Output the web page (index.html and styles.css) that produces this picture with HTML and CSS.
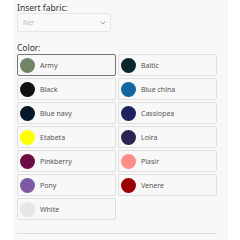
FILE: index.html
```html
<!DOCTYPE html>
<html>
<head>
<meta charset="utf-8">
<link rel="stylesheet" href="styles.css">
</head>
<body>
<div class="panel">
  <div class="label">Insert fabric:</div>
  <div class="select">
    <span class="select-text">Ner</span>
    <svg class="chev" width="6" height="4" viewBox="0 0 6 4"><path d="M0.5 0.5 L3 3 L5.5 0.5" fill="none" stroke="#999" stroke-width="0.9"/></svg>
  </div>
  <div class="label color-label">Color:</div>
  <div class="grid">
    <div class="swatch selected"><span class="dot" style="background:#6f8566"></span><span class="name">Army</span></div>
    <div class="swatch"><span class="dot" style="background:#0c262d"></span><span class="name">Baltic</span></div>
    <div class="swatch"><span class="dot" style="background:#101010"></span><span class="name">Black</span></div>
    <div class="swatch"><span class="dot" style="background:#1466a0"></span><span class="name">Blue china</span></div>
    <div class="swatch"><span class="dot" style="background:#06172a"></span><span class="name">Blue navy</span></div>
    <div class="swatch"><span class="dot" style="background:#1e2360"></span><span class="name">Cassiopea</span></div>
    <div class="swatch"><span class="dot" style="background:#ffff00"></span><span class="name">Etabeta</span></div>
    <div class="swatch"><span class="dot" style="background:#2d2350"></span><span class="name">Loira</span></div>
    <div class="swatch"><span class="dot" style="background:#6d0b45"></span><span class="name">Pinkberry</span></div>
    <div class="swatch"><span class="dot" style="background:#fd8d88"></span><span class="name">Plasir</span></div>
    <div class="swatch"><span class="dot" style="background:#7e5aa5"></span><span class="name">Pony</span></div>
    <div class="swatch"><span class="dot" style="background:#9a0000"></span><span class="name">Venere</span></div>
    <div class="swatch"><span class="dot" style="background:#e6e6e6"></span><span class="name">White</span></div>
  </div>
  <div class="rule"></div>
</div>
</body>
</html>
```
FILE: styles.css
```css
html, body {
  margin: 0;
  padding: 0;
  background: #ffffff;
}
body {
  font-family: "Noto Sans", "DejaVu Sans", sans-serif;
  color: #333;
}
.panel {
  margin-left: 13px;
  width: 200px;
  height: 240px;
  padding: 2px 11px 0 4px;
  background: #f8f8f8;
  box-sizing: content-box;
  display: flex;
  flex-direction: column;
}
.label {
  font-size: 8.5px;
  line-height: 11px;
  color: #333;
}
.select {
  width: 94px;
  height: 19px;
  box-sizing: border-box;
  border: 1px solid #e6e6e6;
  border-radius: 2px;
  background: #f9f9f9;
  display: flex;
  align-items: center;
  justify-content: space-between;
  padding: 0 4px 0 5px;
}
.select-text {
  font-size: 6.5px;
  color: #bbb;
}
.chev {
  display: block;
}
.color-label {
  margin-top: 10px;
  margin-bottom: 1px;
}
.grid {
  display: grid;
  grid-template-columns: 99px 99px;
  grid-auto-rows: 22px;
  gap: 2px 2px;
}
.swatch {
  box-sizing: border-box;
  border: 1px solid #e0e0e0;
  border-radius: 2px;
  display: flex;
  align-items: center;
  padding-left: 2px;
  gap: 5px;
}
.swatch.selected {
  border-color: #777;
}
.dot {
  width: 15px;
  height: 15px;
  border-radius: 50%;
  flex: none;
}
.name {
  font-size: 7px;
  color: #555;
}
.rule {
  margin-top: 13px;
  height: 1px;
  background: #dcdcdc;
  width: 200px;
}
```
